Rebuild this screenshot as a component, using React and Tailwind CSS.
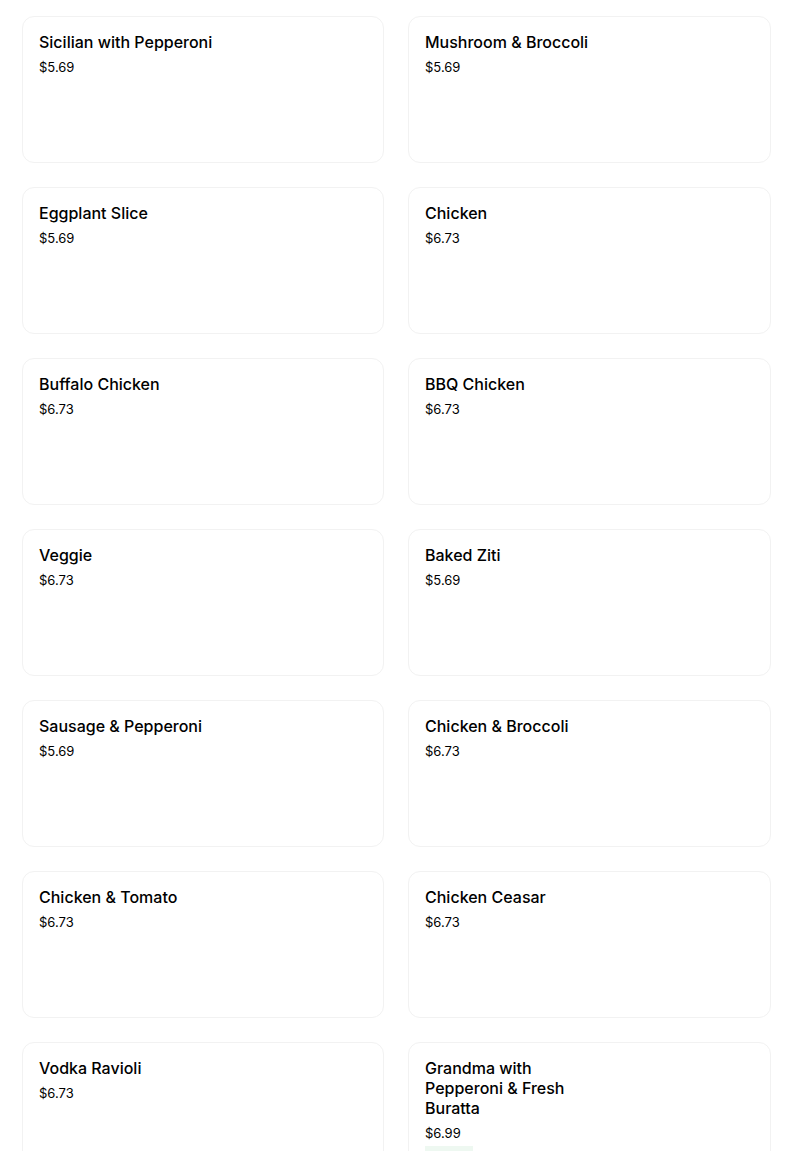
const items = [
  { name: 'Sicilian with Pepperoni', price: '$5.69' },
  { name: 'Mushroom & Broccoli', price: '$5.69' },
  { name: 'Eggplant Slice', price: '$5.69' },
  { name: 'Chicken', price: '$6.73' },
  { name: 'Buffalo Chicken', price: '$6.73' },
  { name: 'BBQ Chicken', price: '$6.73' },
  { name: 'Veggie', price: '$6.73' },
  { name: 'Baked Ziti', price: '$5.69' },
  { name: 'Sausage & Pepperoni', price: '$5.69' },
  { name: 'Chicken & Broccoli', price: '$6.73' },
  { name: 'Chicken & Tomato', price: '$6.73' },
  { name: 'Chicken Ceasar', price: '$6.73' },
  { name: 'Vodka Ravioli', price: '$6.73' },
  { name: 'Grandma with Pepperoni & Fresh Buratta', price: '$6.99', tag: 'Popular' },
];

function ItemCard({ item }) {
  return (
    <div className="min-h-[147px] rounded-xl border border-[#f2f2f2] bg-white px-4 pt-[15px] pb-4">
      <div className="max-w-[176px] text-[16px] font-medium leading-5 text-[#000]">{item.name}</div>
      <div className="mt-[5px] text-[13px] leading-5 text-[#000]">{item.price}</div>
      {item.tag && (
        <div className="mt-0.5 inline-block bg-[#eef8f1] text-[13px] font-medium leading-5 text-[#0e8345]">
          {item.tag}
        </div>
      )}
    </div>
  );
}

export default function App() {
  return (
    <div className="min-h-screen bg-white font-['Inter','Liberation_Sans',sans-serif]">
      <div className="grid grid-cols-[362px_363px] gap-x-[24px] gap-y-[24px] px-[22px] pt-4">
        {items.map((item) => (
          <ItemCard key={item.name} item={item} />
        ))}
      </div>
    </div>
  );
}
